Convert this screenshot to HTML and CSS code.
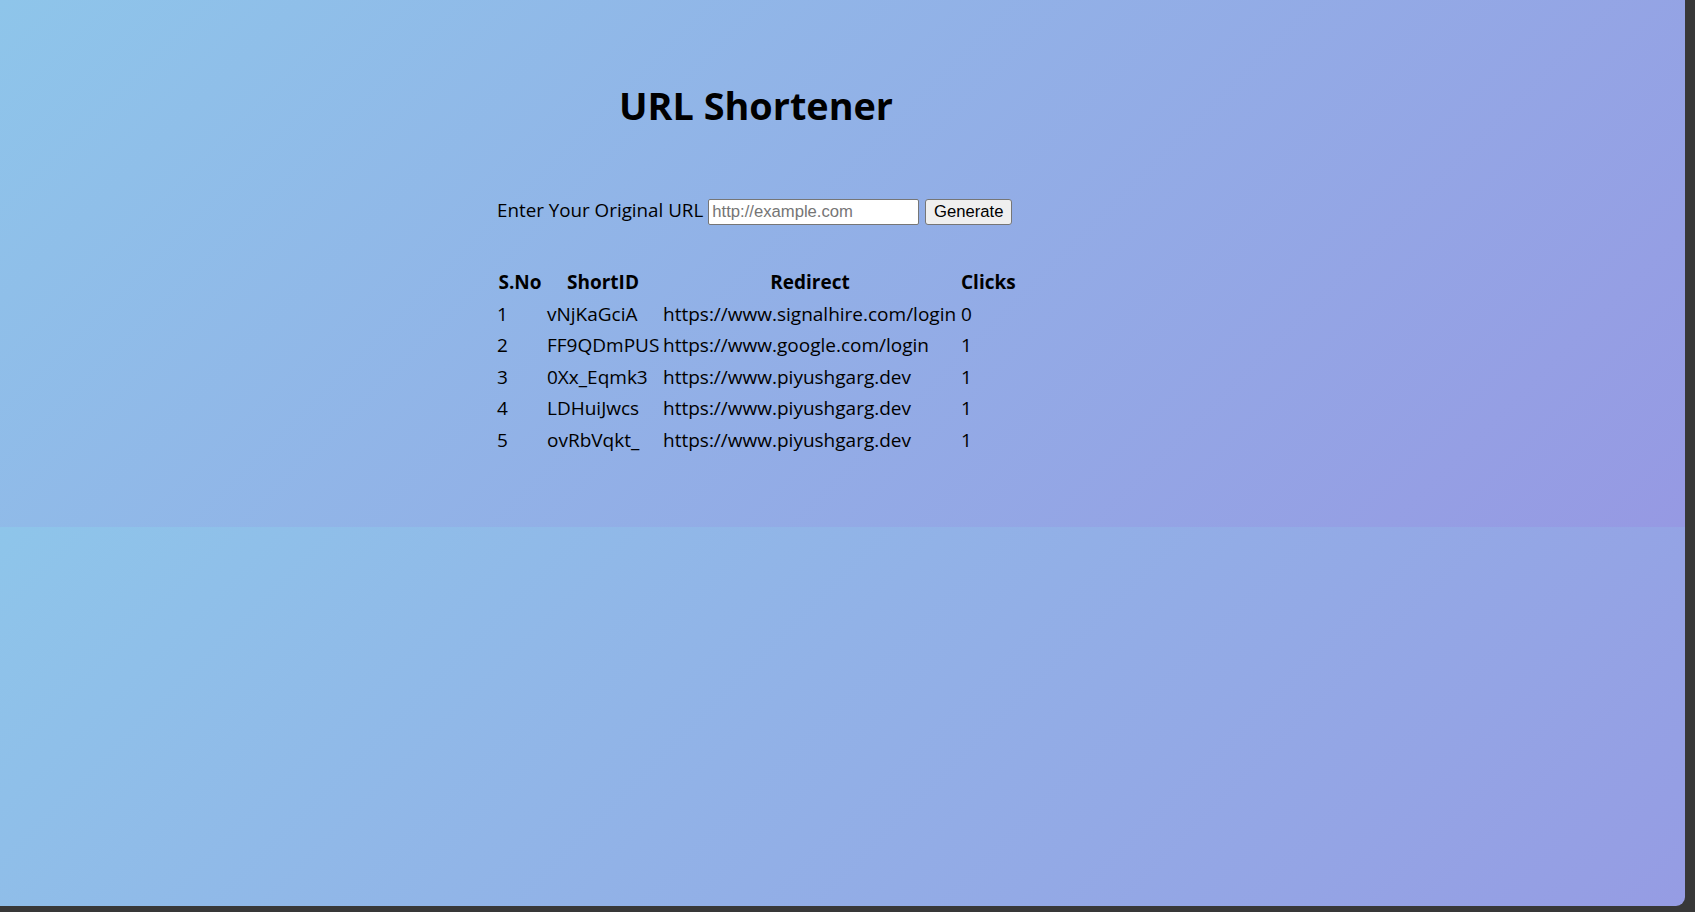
FILE: index.html
```html
<!DOCTYPE html>
<html lang="en">
<head>
<meta charset="utf-8">
<title>URL Shortener</title>
<link rel="stylesheet" href="styles.css">
</head>
<body>
<div class="window">
  <main class="container">
    <h1 class="title">URL Shortener</h1>
    <form class="url-form">
      <label class="url-label" for="url">Enter Your Original URL</label>
      <input class="url-input" id="url" type="text" placeholder="http://example.com">
      <button class="url-button" type="button">Generate</button>
    </form>
    <table class="url-table">
      <thead>
        <tr>
          <th class="col-sno">S.No</th>
          <th class="col-id">ShortID</th>
          <th class="col-redirect">Redirect</th>
          <th class="col-clicks">Clicks</th>
        </tr>
      </thead>
      <tbody>
        <tr><td>1</td><td>vNjKaGciA</td><td>https://www.signalhire.com/login</td><td>0</td></tr>
        <tr><td>2</td><td>FF9QDmPUS</td><td>https://www.google.com/login</td><td>1</td></tr>
        <tr><td>3</td><td>0Xx_Eqmk3</td><td>https://www.piyushgarg.dev</td><td>1</td></tr>
        <tr><td>4</td><td>LDHuiJwcs</td><td>https://www.piyushgarg.dev</td><td>1</td></tr>
        <tr><td>5</td><td>ovRbVqkt_</td><td>https://www.piyushgarg.dev</td><td>1</td></tr>
      </tbody>
    </table>
  </main>
</div>
</body>
</html>
```

FILE: styles.css
```css
html, body {
  margin: 0;
  padding: 0;
}

body {
  background: #383838;
  width: 1695px;
  height: 912px;
  overflow: hidden;
  font-family: "Open Sans", "Noto Sans", sans-serif;
  color: #000;
}

.window {
  width: 1685px;
  height: 906px;
  border-bottom-right-radius: 9px;
  overflow: hidden;
  background-image: linear-gradient(135deg, #8ec5ea 0%, #9699e3 100%);
  background-size: 100% 527px;
  background-repeat: repeat-y;
}

.container {
  width: 524px;
  margin-left: 494px;
  padding-top: 83px;
}

.title {
  margin: 0;
  font-size: 37.8px;
  line-height: 45px;
  font-weight: 700;
  text-align: center;
}

.url-form {
  margin: 71px 0 0 0;
  display: flex;
  align-items: center;
  padding-left: 3px;
  gap: 5px;
  height: 26px;
}

.url-label {
  font-size: 18.8px;
  line-height: 22px;
  padding-bottom: 4px;
  white-space: nowrap;
}

.url-input {
  box-sizing: border-box;
  width: 211px;
  height: 26px;
  margin: 0;
  border: 1px solid #767676;
  border-radius: 2px;
  padding: 0 3px;
  background: #fff;
  font-family: "Liberation Sans", Arial, sans-serif;
  font-size: 16.67px;
  color: #000;
}

.url-input::placeholder {
  color: #757575;
}

.url-button {
  box-sizing: border-box;
  width: 87px;
  height: 26px;
  margin: 0 0 0 1px;
  border: 1px solid #767676;
  border-radius: 3px;
  background: #efefef;
  font-family: "Liberation Sans", Arial, sans-serif;
  font-size: 16.67px;
  color: #000;
  padding: 0;
}

.url-table {
  margin-top: 41px;
  border-spacing: 2px;
  table-layout: fixed;
  width: 524px;
  font-size: 19px;
  line-height: 27.5px;
}

.url-table th,
.url-table td {
  padding: 1px;
  white-space: nowrap;
}

.url-table th {
  font-weight: 700;
  text-align: center;
}

.url-table td {
  text-align: left;
}

.col-sno { width: 46px; }
.col-id { width: 112px; }
.col-redirect { width: 294px; }
.col-clicks { width: 54px; }
```
